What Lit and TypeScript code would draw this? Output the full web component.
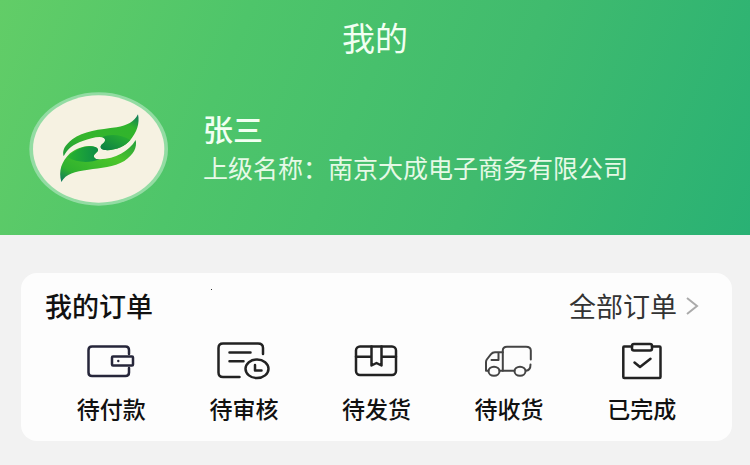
import { LitElement, html, css, svg } from "lit";
import { customElement } from "lit/decorators.js";

const wallet = svg`
  <path d="M46 15V11Q46 7.500 42.500 7.500H9Q5.500 7.500 5.500 11V33.500Q5.500 37 9 37H42.500Q46 37 46 33.500V29"/>
  <rect x="29" y="17.500" width="21" height="9" rx="1"/>
  <circle cx="35.300" cy="22" r="1.200" fill="currentColor" stroke="none"/>`;

const review = svg`
  <path d="M47 15V9Q47 4.500 42 4.500H7Q2.500 4.500 2.500 9V33.500Q2.500 38 7 38H23.500"/>
  <path d="M13.500 13.500H34.500M13.500 22.200H27.500"/>
  <ellipse cx="41" cy="29.800" rx="11.500" ry="9.300"/>
  <path d="M39 26V31.500H45.500"/>`;

const parcel = svg`
  <rect x="8" y="7.500" width="40" height="28.500" rx="4"/>
  <path d="M8 17.700H23M33.500 17.700H48M23.500 7.500V26.500L28.500 24L33.500 26.500V7.500"/>`;

const truck = svg`
  <path d="M21.800 31.700V11.500Q21.800 7.700 26 7.700H45Q49.800 7.700 49.800 11.500V20.500M49.500 25.500Q49.500 31.500 44.800 31.700"/>
  <path d="M21.800 13.200H14Q11.500 13.200 10 15.200L5.800 20.500Q5 21.700 5 23.200V31.700H7.500M18.500 31.700H33.500"/>
  <path d="M17.500 14.500V21H10.500"/>
  <ellipse cx="13" cy="32.300" rx="5.500" ry="4.500"/>
  <ellipse cx="39" cy="32.300" rx="5.500" ry="4.500"/>`;

const done = svg`
  <path d="M18 7.500H10Q9.300 7.500 9.300 8.500V38Q9.300 39 10.300 39H45.500Q46.500 39 46.500 38V8.500Q46.500 7.500 45.500 7.500H38"/>
  <rect x="18" y="5" width="20" height="6.500" rx="2"/>
  <path d="M20.500 23.500L26 28L36.500 19.700"/>`;

const entries = [
  { label: "待付款", icon: wallet, tone: "navy" },
  { label: "待审核", icon: review, tone: "ink" },
  { label: "待发货", icon: parcel, tone: "ink" },
  { label: "待收货", icon: truck, tone: "soft" },
  { label: "已完成", icon: done, tone: "ink" },
];

@customElement("user-avatar")
export class UserAvatar extends LitElement {
  static styles = css`
    :host { display: block; flex: none; }
    .avatar { display: block; width: 140px; height: 114px; }
  `;

  render() {
    return html`
      <svg class="avatar" viewBox="27 36 420 342" role="img" aria-label="头像">
        <defs>
          <linearGradient id="upper" x1="0" y1="1" x2="1" y2="0">
            <stop offset="0" stop-color="#1f9a3a"/>
            <stop offset=".35" stop-color="#35b52c"/>
            <stop offset=".8" stop-color="#30b42c"/>
            <stop offset="1" stop-color="#0c7560"/>
          </linearGradient>
          <linearGradient id="lower" x1="0" y1="1" x2="1" y2="0">
            <stop offset="0" stop-color="#0b7360"/>
            <stop offset=".2" stop-color="#2fb12f"/>
            <stop offset=".65" stop-color="#4cc62a"/>
            <stop offset="1" stop-color="#249d3c"/>
          </linearGradient>
          <linearGradient id="foldUp" x1="0" y1="1" x2="1" y2="0">
            <stop offset="0" stop-color="#0c7d45"/>
            <stop offset="1" stop-color="#2bb52d"/>
          </linearGradient>
          <linearGradient id="foldLow" x1="0" y1="0" x2="1" y2="0">
            <stop offset="0" stop-color="#27b32f"/>
            <stop offset="1" stop-color="#0b8a48"/>
          </linearGradient>
        </defs>
        <ellipse cx="236" cy="207" rx="208" ry="170" fill="#93dca3"/>
        <ellipse cx="236" cy="207" rx="197" ry="161" fill="#f6f2e2"/>
        <path fill="url(#upper)" d="M354 103C342 126 322 136 290 142C238 149 190 153 157 178C134 196 126 212 131 229C142 207 160 192 188 183C212 175 236 167 251 173C261 178 254 187 247 192C239 198 240 207 253 210C284 213 316 199 331 180C350 158 360 130 354 103Z"/>
        <path fill="url(#foldUp)" d="M247 171C268 161 304 162 331 180C316 199 284 213 253 210C240 207 239 198 247 192C254 187 261 178 247 171Z"/>
        <path fill="url(#lower)" d="M124 306C115 272 124 246 150 220C174 202 205 192 228 202C241 210 231 216 224 223C217 232 226 239 240 238C286 236 326 215 347 180C352 203 341 224 313 243C282 262 242 264 205 269C164 275 138 280 124 306Z"/>
        <path fill="url(#foldLow)" d="M143 231C165 207 203 191 228 202C241 210 231 216 224 223C217 232 226 239 240 238C207 250 169 248 143 231Z"/>
      </svg>`;
  }
}

@customElement("order-card")
export class OrderCard extends LitElement {
  static styles = css`
    :host { display: block; }
    .card {
      box-sizing: border-box;
      position: relative;
      background: #fdfdfd;
      border-radius: 16px;
      padding: 13px 24px 16px;
    }
    .speck { position: absolute; top: 16px; left: 190px; width: 1px; height: 1px; background: #333; }
    .head { display: flex; align-items: center; justify-content: space-between; padding-right: 9px; }
    .title { margin: 0; font-size: 27px; line-height: 40px; font-weight: 500; color: #111; }
    .all {
      display: flex;
      align-items: center;
      gap: 8px;
      font-size: 27px;
      line-height: 40px;
      color: #333;
      text-decoration: none;
    }
    .chevron { width: 14px; height: 20px; fill: none; stroke: #aaa; stroke-width: 2; }
    .entries { display: grid; grid-template-columns: repeat(5, 1fr); padding-top: 13px; }
    .entry {
      display: flex;
      flex-direction: column;
      align-items: center;
      gap: 8px;
      padding: 0;
      border: 0;
      background: none;
      font: inherit;
      font-size: 23px;
      font-weight: 500;
      line-height: 34px;
      color: #111;
      cursor: pointer;
    }
    .icon {
      width: 56px;
      height: 44px;
      overflow: visible;
      fill: none;
      stroke: currentColor;
      stroke-width: 2.5;
      stroke-linecap: round;
      stroke-linejoin: round;
    }
    .navy { color: #26263a; }
    .ink { color: #222; }
    .soft { color: #444; stroke-width: 2; }
  `;

  render() {
    return html`
      <section class="card">
        <span class="speck" aria-hidden="true"></span>
        <div class="head">
          <h2 class="title">我的订单</h2>
          <a class="all" href="#orders">
            全部订单
            <svg class="chevron" viewBox="0 0 14 20" aria-hidden="true"><path d="M2 2L12 10L2 18"/></svg>
          </a>
        </div>
        <nav class="entries">
          ${entries.map(
            (e) => html`
              <button class="entry" type="button">
                <svg class="icon ${e.tone}" viewBox="0 0 56 44" aria-hidden="true">${e.icon}</svg>
                <span>${e.label}</span>
              </button>`
          )}
        </nav>
      </section>`;
  }
}

@customElement("app-root")
export class AppRoot extends LitElement {
  static styles = css`
    :host {
      display: block;
      min-height: 100vh;
      background: #f2f2f2;
      font-family: "Noto Sans CJK SC", "Noto Sans", sans-serif;
    }
    .banner {
      background: linear-gradient(112deg, #62cd67 0%, #4ec56a 30%, #40bb6e 65%, #29b174 100%);
      color: #f2fff2;
      padding: 12px 29px 29px;
    }
    .heading { margin: 0; text-align: center; font-size: 33px; line-height: 50px; font-weight: 400; }
    .profile { display: flex; align-items: center; gap: 34px; padding-top: 30px; }
    .who { padding-bottom: 4px; }
    .name { margin: 0; font-size: 30px; line-height: 40px; font-weight: 500; }
    .parent { margin: 0; font-size: 25px; line-height: 38px; color: #e6f9e6; }
    .content { padding: 38px 18px 24px 21px; }
  `;

  render() {
    return html`
      <header class="banner">
        <h1 class="heading">我的</h1>
        <div class="profile">
          <user-avatar></user-avatar>
          <div class="who">
            <p class="name">张三</p>
            <p class="parent">上级名称：南京大成电子商务有限公司</p>
          </div>
        </div>
      </header>
      <main class="content"><order-card></order-card></main>`;
  }
}
